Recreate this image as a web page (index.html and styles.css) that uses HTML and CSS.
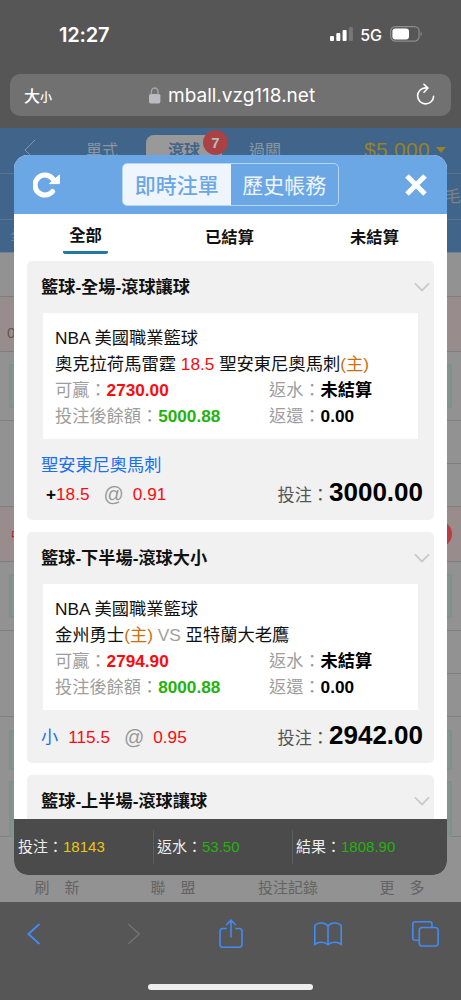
FILE: index.html
```html
<!DOCTYPE html>
<html lang="zh-Hant">
<head>
  <meta charset="UTF-8">
  <meta name="viewport" content="width=device-width, initial-scale=1.0">
  <title>即時注單</title>
  <link rel="stylesheet" href="styles.css">
</head>
<body>

<div class="status">
  <span class="clock">12:27</span>
  <svg class="signal" width="24" height="16" viewBox="0 0 24 16">
    <rect x="0" y="10" width="4" height="5" rx="1" fill="#fff"/>
    <rect x="6.3" y="7" width="4" height="8" rx="1" fill="#fff"/>
    <rect x="12.6" y="4" width="4" height="11" rx="1" fill="#fff"/>
    <rect x="18.9" y="1" width="4" height="14" rx="1" fill="#777"/>
  </svg>
  <span class="net">5G</span>
  <svg class="battery" width="33" height="16" viewBox="0 0 33 16">
    <rect x=".7" y=".7" width="28.4" height="14.4" rx="4.6" fill="none" stroke="#8c8c8c" stroke-width="1.2"/>
    <rect x="2.4" y="2.4" width="16.6" height="11" rx="3" fill="#fff"/>
    <path d="M30.6 5.6c1.6.8 1.6 3.8 0 4.6z" fill="#8c8c8c"/>
  </svg>
</div>

<div class="urlbar">
  <span class="aa">大<small>小</small></span>
  <span class="host">
    <svg width="12" height="17" viewBox="0 0 12 17">
      <rect x="0" y="7" width="11.4" height="9.4" rx="1.6" fill="#bcbbc1"/>
      <path d="M2.4 7.5V4.6a3.3 3.6 0 0 1 6.6 0v2.9" fill="none" stroke="#a5a4a9" stroke-width="1.4"/>
    </svg>
    mball.vzg118.net
  </span>
  <svg class="reload" width="20" height="24" viewBox="0 0 20 24">
    <path d="M11.4 4.9H9.5a8 8 0 1 0 8.1 8.3M8 1.4l4 3.6-4 4.2" fill="none" stroke="#fff" stroke-width="1.6" stroke-linecap="round" stroke-linejoin="round"/>
  </svg>
</div>

<div class="page">
  <div class="nav">
    <svg class="nav-back" width="12" height="22" viewBox="0 0 12 22"><path d="M11 1L1 11l10 10" fill="none" stroke="#8796a8" stroke-width="1"/></svg>
    <span class="nav-item">單式</span>
    <span class="nav-item on">滾球<b class="badge">7</b></span>
    <span class="nav-item">過關</span>
    <span class="money">$5,000<i></i></span>
  </div>
  <div class="sports">毛</div>
  <div class="subnav">全</div>
  <div class="row r1"></div>
  <div class="row pink r2">0</div>
  <div class="row r3"><div class="odds"></div></div>
  <div class="row r4 half"><div></div></div>
  <div class="row r4"></div>
  <div class="row pink r5"><span class="live">中</span><span class="dot"></span></div>
  <div class="row r3"><div class="odds"></div></div>
  <div class="row r4 half"><div></div></div>
  <div class="row r4"></div>
  <div class="row r6"><div class="odds a"></div><div class="odds b"></div><div class="odds c"></div></div>
  <div class="tabs">
    <span>刷　新</span><span>聯　盟</span><span>投注記錄</span><span>更　多</span>
  </div>

  <div class="modal">
    <div class="modal-head">
      <svg class="refresh" width="28" height="28" viewBox="0 0 28 28">
        <path d="M19.5 20.6A10 10 0 1 1 19.8 7.8" fill="none" stroke="#fff" stroke-width="5.2" stroke-linecap="round"/>
        <path d="M26.4 4v8.600H16.400z" fill="#fff" stroke="#fff" stroke-linejoin="round"/>
      </svg>
      <div class="segment">
        <span class="on">即時注單</span><span>歷史帳務</span>
      </div>
      <svg class="close" width="22" height="22" viewBox="0 0 22 22"><path d="M2 2l18 18M20 2L2 20" stroke="#fff" stroke-width="5"/></svg>
    </div>

    <div class="modal-body">
      <div class="filter">
        <span class="on">全部</span><span>已結算</span><span>未結算</span>
      </div>

      <div class="card">
        <div class="title">籃球-全場-滾球讓球
          <svg width="16" height="10" viewBox="0 0 16 10"><path d="M1 1.4l7 7 7-7" fill="none" stroke="#c9c9c9" stroke-width="1.8"/></svg>
        </div>
        <div class="info">
          <div>NBA 美國職業籃球</div>
          <div>奧克拉荷馬雷霆 <span class="red">18.5</span> 聖安東尼奧馬刺<span class="home">(主)</span></div>
          <div class="cols"><span>可贏：<b class="red">2730.00</b></span><span>返水：<b>未結算</b></span></div>
          <div class="cols"><span>投注後餘額：<b class="green">5000.88</b></span><span>返還：<b>0.00</b></span></div>
        </div>
        <div class="team">聖安東尼奧馬刺</div>
        <div class="bet">
          <span class="pick"><b>+</b>18.5</span><span class="at">@</span><span class="rate">0.91</span>
          <span class="stake">投注：<b>3000.00</b></span>
        </div>
      </div>

      <div class="card">
        <div class="title">籃球-下半場-滾球大小
          <svg width="16" height="10" viewBox="0 0 16 10"><path d="M1 1.4l7 7 7-7" fill="none" stroke="#c9c9c9" stroke-width="1.8"/></svg>
        </div>
        <div class="info">
          <div>NBA 美國職業籃球</div>
          <div>金州勇士<span class="home">(主)</span> <span class="vs">VS</span> 亞特蘭大老鷹</div>
          <div class="cols"><span>可贏：<b class="red">2794.90</b></span><span>返水：<b>未結算</b></span></div>
          <div class="cols"><span>投注後餘額：<b class="green">8000.88</b></span><span>返還：<b>0.00</b></span></div>
        </div>
        <div class="bet ou">
          <span class="side">小</span><span class="pick">115.5</span><span class="at">@</span><span class="rate">0.95</span>
          <span class="stake">投注：<b>2942.00</b></span>
        </div>
      </div>

      <div class="card">
        <div class="title">籃球-上半場-滾球讓球
          <svg width="16" height="10" viewBox="0 0 16 10"><path d="M1 1.4l7 7 7-7" fill="none" stroke="#c9c9c9" stroke-width="1.8"/></svg>
        </div>
      </div>
    </div>

    <div class="modal-foot">
      <div>投注：<span class="yellow">18143</span></div>
      <div>返水：<span class="green">53.50</span></div>
      <div>結果：<span class="green">1808.90</span></div>
    </div>
  </div>
</div>

<div class="toolbar">
  <div class="icons">
    <svg width="14" height="22" viewBox="0 0 14 22"><path d="M12.4 1L1.4 11l11 10" fill="none" stroke="#428bf5" stroke-width="2"/></svg>
    <svg width="14" height="22" viewBox="0 0 14 22"><path d="M1.2 1l11 10-11 10" fill="none" stroke="#717171" stroke-width="1.6"/></svg>
    <svg width="24" height="30" viewBox="0 0 24 30"><path d="M7.8 9.5H4a3 3 0 0 0-3 3v12.700a3 3 0 0 0 3 3h16a3 3 0 0 0 3-3V12.500a3 3 0 0 0-3-3h-3.800M12 18.500V1.400M7.200 6L12 1.200 16.800 6" fill="none" stroke="#428bf5" stroke-width="1.6"/></svg>
    <svg width="28" height="24" viewBox="0 0 28 24"><path d="M14 4.5C11.500.2 4-.1 .8 3.500v18.800c3.800-3 10-2.700 13.200.3 3.200-3 9.400-3.300 13.200-.3V3.500C24-.1 16.500.2 14 4.500zM14 4.500v18" fill="none" stroke="#428bf5" stroke-width="1.6"/></svg>
    <svg width="27" height="26" viewBox="0 0 27 26"><path d="M20 6V3.200A2.400 2.400 0 0 0 17.600.8H3.200A2.400 2.400 0 0 0 .8 3.200v13.600a2.400 2.400 0 0 0 2.400 2.400H7" fill="none" stroke="#428bf5" stroke-width="1.6"/><rect x="7.3" y="6.5" width="18.8" height="18.5" rx="2.8" fill="none" stroke="#428bf5" stroke-width="1.6"/></svg>
  </div>
  <div class="homebar"></div>
</div>

</body>
</html>
```
FILE: styles.css
```css
* { box-sizing: border-box; }
body { margin: 0; width: 461px; height: 1000px; overflow: hidden; background: #565656; font-family: "Liberation Sans", "Noto Sans CJK TC", sans-serif; font-size: 17.2px; color: #111; }
svg { display: block; flex: none; }
b { font-weight: bold; }

.status { height: 74px; display: flex; align-items: center; padding: 0 38px 6px 59px; color: #fff; font-family: Inter, "Noto Sans CJK TC", sans-serif; }
.clock { font-size: 20px; font-weight: 600; flex: 1; letter-spacing: -.2px; padding-top: 1px; }
.net { font-size: 16px; font-weight: 500; margin: 0 8px 0 6px; padding-top: 2px; }

.urlbar { height: 42px; margin: 0 10px; padding: 0 15px 0 14px; border-radius: 10px; background: #717171; color: #fff; display: flex; align-items: center; font-family: Inter, "Noto Sans CJK TC", sans-serif; }
.aa { font-size: 16px; font-weight: 500; width: 40px; }
.aa small { font-size: 12px; }
.host { margin-left: 85px; display: flex; align-items: center; gap: 7px; font-size: 19px; }
.reload { margin-left: auto; }

.page { position: relative; height: 774px; margin-top: 12px; background: #929292; overflow: hidden; }
.nav { height: 45px; padding: 4px 15px 0 24px; display: flex; align-items: flex-start; background: #41658a; color: #8b97a4; font-size: 16px; line-height: 38px; }
.nav-back { margin-top: 7px; }
.nav-item { width: 76px; text-align: center; }
.nav-item:nth-child(2) { margin-left: 28px; }
.nav-item.on { position: relative; margin: 3px 5px 0 6px; height: 38px; line-height: 32px; border-radius: 8px; background: #999; color: #41658a; font-weight: bold; }
.badge { position: absolute; right: -6px; top: -5px; width: 25px; height: 25px; border-radius: 50%; background: #a84245; color: #bbb; font-size: 15px; line-height: 25px; }
.money { margin-left: auto; color: #968323; font-size: 21px; line-height: 36px; letter-spacing: .3px; display: flex; align-items: center; }
.money i { margin-left: 6px; border: 5px solid transparent; border-top: 6px solid #968323; border-bottom: 0; }
.sports { height: 47px; background: #41658a; border: solid #587490; border-width: 1px 0; color: #7b8187; text-align: right; line-height: 45px; font-size: 16px; }
.subnav { height: 33px; padding-left: 10px; background: #41658a; color: #748494; font-size: 14px; line-height: 30px; border-bottom: 1px solid #6f8296; }

.row { border-bottom: 1px solid #7e7e7e; }
.pink { background: #998c8c; }
.r1 { height: 44px; }
.r2 { height: 55px; padding-left: 7px; color: #5f5555; font-size: 15px; line-height: 71px; }
.r3 { height: 69px; padding: 12px 9px 0; }
.r4 { height: 43px; }
.r4.half { border-bottom: 0; }
.half div { height: 43px; margin-left: 50%; border-bottom: 1px solid #7e7e7e; }
.r5 { height: 55px; display: flex; justify-content: space-between; align-items: center; padding: 0 9px 0 11px; }
.live { color: #b5202a; font-size: 12px; }
.dot { width: 26px; height: 26px; border-radius: 50%; background: #b83c40; }
.odds { height: 44px; border: 2px solid #7b9488; background: #87928e; }
.r6 { height: 120px; padding: 13px 9px 0; }
.odds.a { height: 40px; }
.odds.b { height: 40px; margin-top: 11px; }
.odds.c { height: 16px; border-top: 0; border-bottom: 0; }
.tabs { height: 68px; padding: 40px 0 0 8px; display: grid; grid-template-columns: 98px 134px 96px 1fr; text-align: center; background: #929292; color: #636363; font-size: 15px; line-height: 22px; }
.tabs span:last-child { padding-left: 7px; }

.modal { position: absolute; left: 14px; top: 27px; width: 433px; height: 720px; border-radius: 14px; overflow: hidden; background: #fff; display: flex; flex-direction: column; }
.modal-head { height: 59px; padding: 0 20px 0 19px; flex: none; display: flex; align-items: center; background: #6ba7e4; }
.segment { width: 217px; height: 43px; margin-left: 61px; display: flex; border: 1px solid #b5d5f5; border-radius: 5px; overflow: hidden; font-size: 21px; line-height: 44px; color: #eef5fd; text-align: center; }
.segment span { flex: 1; }
.segment .on { background: #eff5fd; color: #6ba7e4; font-weight: 500; }
.close { margin-left: auto; }

.modal-body { flex: 1; min-height: 0; overflow: hidden; padding: 0 13px; }
.filter { height: 47px; display: grid; grid-template-columns: 117px 171px 1fr; text-align: center; font-size: 16.3px; font-weight: bold; line-height: 46px; color: #111; }
.filter .on { width: 45px; height: 40px; margin-left: 36px; line-height: 42px; border-bottom: 3px solid #2577a6; border-radius: 2px; }

.card { margin-bottom: 12px; padding: 0 16px 0 14px; border-radius: 5px; background: #f1f1f1; overflow: hidden; }
.title { height: 52px; line-height: 51px; font-size: 17.2px; font-weight: bold; display: flex; justify-content: space-between; align-items: center; }
.title svg { margin-right: -12px; }
.info { height: 126px; margin: 0 0 0 2px; padding: 13px 0 0 12px; background: #fff; font-size: 17.3px; line-height: 25.8px; white-space: nowrap; }
.info > div { height: 26px; }
.cols { display: grid; grid-template-columns: 214px 1fr; color: #9d9d9d; font-size: 17.2px; }
.cols b { color: #000; }
.red, .cols .red, .pick, .rate { color: #fb0a0e; }
.green, .cols .green { color: #25b20c; }
.home { color: #c9700c; }
.vs { color: #a0a0a0; }
.team { height: 29px; margin-top: 12px; line-height: 29px; color: #1a6df5; }
.bet { height: 40px; display: flex; line-height: 29px; white-space: nowrap; margin-right: -5px; }
.pick { margin-left: 5px; }
.pick b { color: #000; }
.at { margin-left: 14px; color: #999; font-size: 20px; }
.rate { margin-left: 9px; }
.stake { margin-left: auto; color: #555; }
.stake b { font-size: 26px; color: #000; line-height: 24px; }
.bet.ou { height: 53px; padding-top: 13px; }
.side { color: #1a6df5; }
.ou .pick { margin-left: 10px; }

.modal-foot { height: 56px; flex: none; padding: 11px 0 11px 4px; display: grid; grid-template-columns: 135px 139px 1fr; background: #4b4b4b; color: #eee; font-size: 15px; line-height: 34px; }
.modal-foot div + div { border-left: 1px solid #5d5d5d; padding-left: 3px; }
.modal-foot .yellow { color: #e8c810; }

.toolbar { height: 98px; background: #565656; }
.icons { height: 64px; padding-right: 8px; display: grid; grid-template-columns: 68px 132px 61px 134px 1fr; align-items: center; justify-items: center; }
.icons svg:last-child { margin-left: 3px; }
.homebar { width: 165px; height: 6px; margin: 18px auto 0; border-radius: 3px; background: #eee; }
```
